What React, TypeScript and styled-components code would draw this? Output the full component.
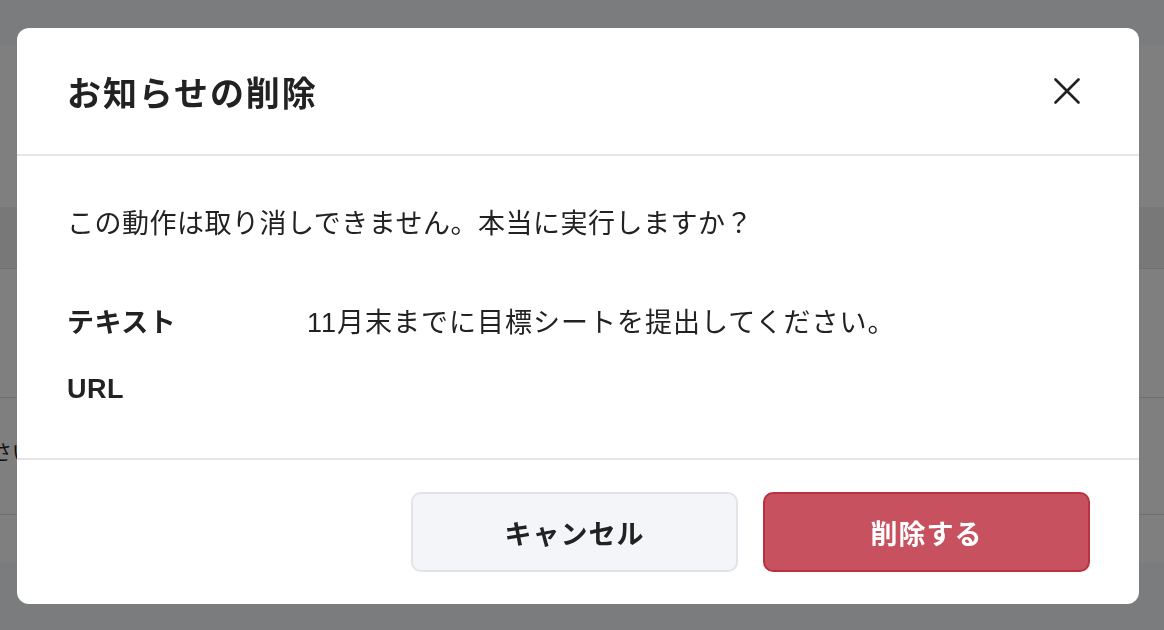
import styled, { createGlobalStyle } from 'styled-components'

const GlobalStyle = createGlobalStyle`
  html, body {
    margin: 0;
    padding: 0;
  }
  body {
    font-family: "Liberation Sans", "Noto Sans CJK JP", sans-serif;
    color: #222;
    overflow: hidden;
  }
`

// the list page that sits under the dimmed overlay
const Page = styled.div`
  width: 1164px;
  height: 630px;
  background: #f6f8fc;
  padding-top: 45px;
  box-sizing: border-box;
`

const Card = styled.div`
  background: #fff;
  display: flex;
  flex-direction: column;
`

const CardSpacer = styled.div<{ $h: number }>`
  height: ${props => props.$h}px;
`

const TableHead = styled.div`
  height: 61px;
  background: #f0f0f0;
  border-bottom: 1px solid #dedede;
`

const TableRow = styled.div<{ $h: number }>`
  height: ${props => props.$h}px;
  border-bottom: 1px solid #dedede;
  display: flex;
  align-items: center;
  overflow: hidden;
`

const RowText = styled.span`
  font-size: 20px;
  margin-left: -48px;
  margin-top: -10px;
  white-space: nowrap;
`

const Overlay = styled.div`
  position: fixed;
  inset: 0;
  background: rgba(0, 0, 0, 0.5);
  display: flex;
  align-items: center;
  padding: 2px 0 0 17px;
`

const Modal = styled.div`
  width: 1122px;
  background: #fff;
  border-radius: 12px;
  overflow: hidden;
`

const Header = styled.div`
  height: 126px;
  padding: 0 59px 0 50px;
  display: flex;
  align-items: center;
  justify-content: space-between;
  border-bottom: 2px solid #e4e4ea;
`

const Title = styled.h2`
  margin: 0;
  font-size: 34px;
  letter-spacing: 1.9px;
  font-weight: 700;
  color: #222;
`

const CloseButton = styled.button`
  width: 26px;
  height: 26px;
  padding: 0;
  border: none;
  background: transparent;
  display: flex;
  align-items: center;
  justify-content: center;
  cursor: pointer;
`

const Body = styled.div`
  padding: 48px 50px 49px;
  border-bottom: 2px solid #e4e4ea;
`

const Message = styled.p`
  margin: 0;
  font-size: 27px;
  line-height: 40px;
  letter-spacing: 0.5px;
`

const DetailList = styled.dl`
  margin: 59px 0 0;
  display: grid;
  grid-template-columns: 240px 1fr;
  row-gap: 26px;
  font-size: 27px;
  line-height: 40px;
`

const Label = styled.dt`
  font-weight: 700;
  letter-spacing: 0.5px;
`

const Value = styled.dd`
  margin: 0;
  letter-spacing: 1px;
`

const Footer = styled.div`
  padding: 32px 49px;
  display: flex;
  justify-content: flex-end;
  gap: 25px;
`

const Button = styled.button<{ $danger?: boolean }>`
  width: 327px;
  height: 80px;
  border-radius: 10px;
  font-family: inherit;
  font-size: 27px;
  font-weight: 700;
  letter-spacing: 1px;
  cursor: pointer;
  border: 2px solid ${props => props.$danger ? '#b8323f' : '#e2e3e8'};
  background: ${props => props.$danger ? '#c8515f' : '#f4f5f9'};
  color: ${props => props.$danger ? '#fff' : '#222'};
`

export default function App () {
  return (
    <>
      <GlobalStyle />
      <Page>
        <Card>
          <CardSpacer $h={162} />
          <TableHead />
          <TableRow $h={128} />
          <TableRow $h={116}>
            <RowText>ください。</RowText>
          </TableRow>
          <CardSpacer $h={47} />
        </Card>
      </Page>

      <Overlay>
        <Modal>
          <Header>
            <Title>お知らせの削除</Title>
            <CloseButton aria-label="閉じる">
              <svg width="26" height="26" viewBox="0 0 26 26">
                <path d="M1.5 1.5 24.5 24.5M24.5 1.5 1.5 24.5" stroke="#222" strokeWidth="2.6" strokeLinecap="round" fill="none" />
              </svg>
            </CloseButton>
          </Header>

          <Body>
            <Message>この動作は取り消しできません。本当に実行しますか？</Message>
            <DetailList>
              <Label>テキスト</Label>
              <Value>11月末までに目標シートを提出してください。</Value>
              <Label>URL</Label>
              <Value></Value>
            </DetailList>
          </Body>

          <Footer>
            <Button>キャンセル</Button>
            <Button $danger>削除する</Button>
          </Footer>
        </Modal>
      </Overlay>
    </>
  )
}
